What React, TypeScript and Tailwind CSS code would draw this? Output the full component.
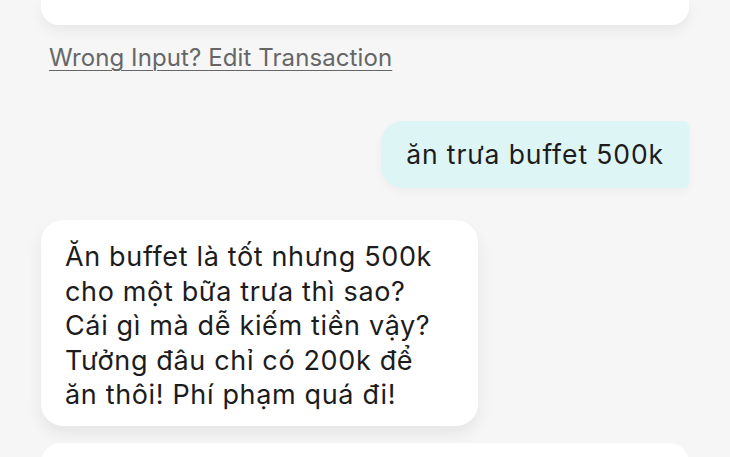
import React from "react";

const font = { fontFamily: "Inter, 'Noto Sans', sans-serif" };

const reply = [
  "Ăn buffet là tốt nhưng 500k",
  "cho một bữa trưa thì sao?",
  "Cái gì mà dễ kiếm tiền vậy?",
  "Tưởng đâu chỉ có 200k để",
  "ăn thôi! Phí phạm quá đi!",
];

export default function App() {
  return (
    <div className="h-[457px] w-[730px] overflow-hidden bg-[#f6f6f6] text-[#1c1c1c]" style={font}>
      <div className="flex flex-col px-[41px]">
        {/* thẻ giao dịch phía trên (bị cắt) */}
        <div className="h-[25px] rounded-b-[18px] bg-white shadow-[0_6px_14px_rgba(0,0,0,0.06)]" />

        <a className="mt-[18px] ml-[8px] w-fit text-[24px] leading-[30px] tracking-[0.1px] text-[#666666] underline decoration-1 underline-offset-[4px]">
          Wrong Input? Edit Transaction
        </a>

        {/* tin nhắn của người dùng */}
        <div className="mt-[48px] flex justify-end">
          <div className="flex h-[67px] items-center rounded-l-[22px] rounded-r-[6px] bg-[#def5f6] pl-[25px] pr-[25px] text-[26.5px] tracking-[0.9px] shadow-[0_4px_10px_rgba(0,0,0,0.04)]">
            ăn trưa buffet 500k
          </div>
        </div>

        {/* trả lời của bot */}
        <div className="mt-[32px] flex">
          <div className="w-[437px] rounded-[22px] bg-white pt-[20px] pb-[13px] pl-[24px] pr-[16px] text-[27px] leading-[34.5px] tracking-[0.65px] shadow-[0_8px_16px_rgba(0,0,0,0.07)]">
            {reply.map((l) => (
              <div key={l} className="whitespace-nowrap">{l}</div>
            ))}
          </div>
        </div>

        <div className="mt-[17px] h-[40px] rounded-t-[20px] bg-white" />
      </div>
    </div>
  );
}
